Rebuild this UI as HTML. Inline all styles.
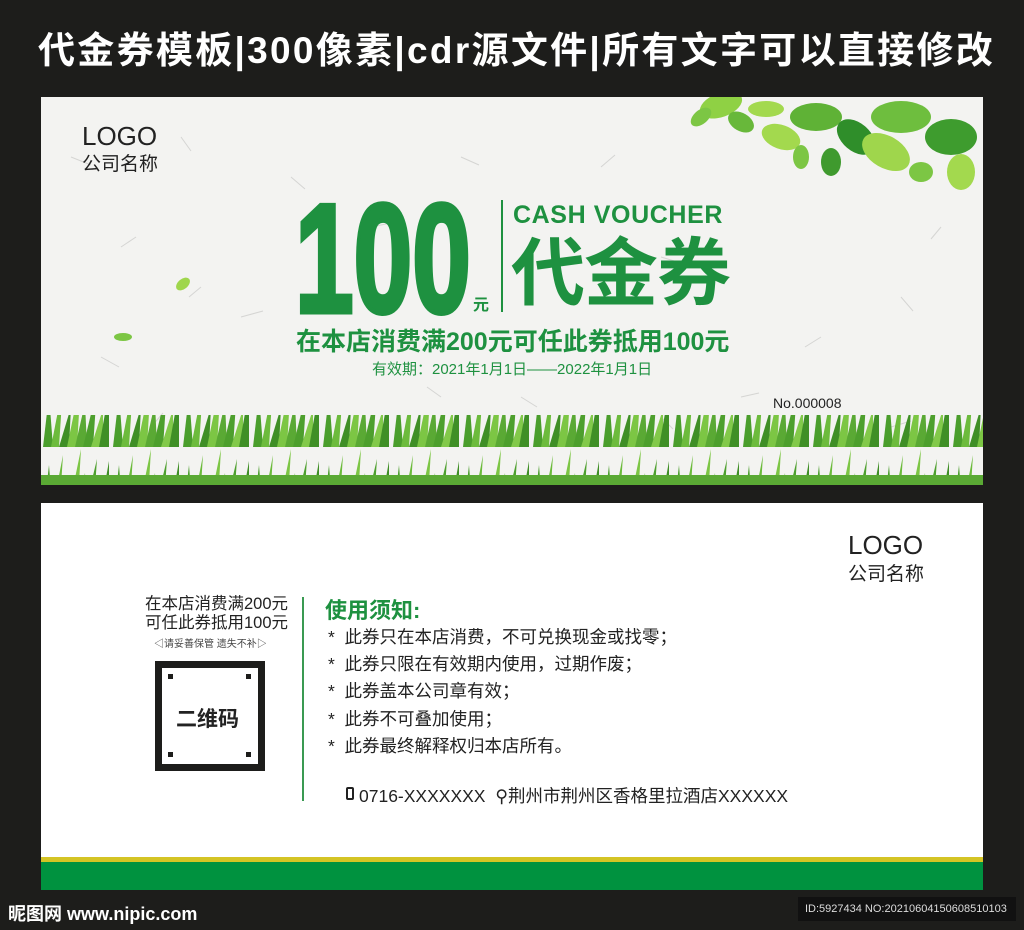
<!DOCTYPE html>
<html><head><meta charset="utf-8"><style>
body{margin:0;width:1024px;height:930px;background:#1d1d1b;position:relative;overflow:hidden;font-family:"Liberation Sans","Noto Sans CJK SC",sans-serif}
.a{position:absolute;white-space:nowrap}
.g{color:#1e9140}
</style></head><body>
<div class="a" style="left:38px;top:28px;color:#fff;font-size:37px;font-weight:bold;letter-spacing:2.3px;line-height:46px">代金券模板|300像素|cdr源文件|所有文字可以直接修改</div>

<div class="a" style="left:41px;top:97px;width:942px;height:388px;background:#f3f3f1;overflow:hidden">
<svg width="942" height="388" style="position:absolute;left:0;top:0">
<defs>
<pattern id="gr" width="70" height="70" patternUnits="userSpaceOnUse">
<polygon points="2,70 8,18 12,70" fill="#4a9e2c"/>
<polygon points="10,70 22,8 18,70" fill="#6cbb3c"/>
<polygon points="18,70 30,30 28,70" fill="#3f8f26"/>
<polygon points="26,70 40,2 36,70" fill="#7cc644"/>
<polygon points="34,70 44,26 46,70" fill="#5aa934"/>
<polygon points="42,70 56,12 52,70" fill="#4d9f2d"/>
<polygon points="50,70 62,32 62,70" fill="#82c94a"/>
<polygon points="58,70 68,14 68,70" fill="#3f8f26"/>
</pattern>
</defs>
<g stroke="#c8c8c6" stroke-width="1" fill="none" opacity="0.7">
<path d="M30 60l20 8M80 150l15-10M140 40l10 14M200 220l22-6M60 260l18 10M250 80l14 12M330 130l20-4M110 330l12-14M420 60l18 8M560 70l14-12M620 160l20 6M780 240l-16 10M860 200l12 14M700 300l18-4M900 130l-10 12M480 300l16 10M160 190l-12 10M400 300l-14-10M850 330l20-6M620 320l12 12"/>
</g>
<rect x="0" y="318" width="942" height="70" fill="url(#gr)"/>
<rect x="0" y="378" width="942" height="10" fill="#5aa934"/>
<g>
<ellipse cx="680" cy="8" rx="22" ry="12" fill="#8fd144" transform="rotate(-20 680 8)"/>
<ellipse cx="660" cy="20" rx="12" ry="7" fill="#7cc644" transform="rotate(-40 660 20)"/>
<ellipse cx="700" cy="25" rx="14" ry="9" fill="#68b83a" transform="rotate(30 700 25)"/>
<ellipse cx="740" cy="40" rx="20" ry="12" fill="#a3d94e" transform="rotate(20 740 40)"/>
<ellipse cx="775" cy="20" rx="26" ry="14" fill="#5fb236"/>
<ellipse cx="815" cy="40" rx="22" ry="14" fill="#2f8e2a" transform="rotate(40 815 40)"/>
<ellipse cx="845" cy="55" rx="26" ry="16" fill="#9fd64c" transform="rotate(30 845 55)"/>
<ellipse cx="860" cy="20" rx="30" ry="16" fill="#6ebe3e"/>
<ellipse cx="910" cy="40" rx="26" ry="18" fill="#3e9c2e"/>
<ellipse cx="920" cy="75" rx="14" ry="18" fill="#a3d94e"/>
<ellipse cx="790" cy="65" rx="10" ry="14" fill="#3f9a2e"/>
<ellipse cx="760" cy="60" rx="8" ry="12" fill="#7cc644"/>
<ellipse cx="725" cy="12" rx="18" ry="8" fill="#a3d94e"/>
<ellipse cx="880" cy="75" rx="12" ry="10" fill="#7cc644"/>
</g>
<ellipse cx="142" cy="187" rx="8" ry="5" fill="#9fd64c" transform="rotate(-40 142 187)"/>
<ellipse cx="82" cy="240" rx="9" ry="4" fill="#7cc644"/>
</svg>
<div class="a" style="left:41px;top:24px;font-size:26px;color:#222">LOGO</div>
<div class="a" style="left:41px;top:52px;font-size:19px;color:#222">公司名称</div>
<div class="a g" style="left:254px;top:84px;font-size:155px;font-weight:bold;line-height:155px;-webkit-text-stroke:5px #1e9140;transform:scaleX(0.68);transform-origin:left top">100</div>
<div class="a g" style="left:432px;top:194px;font-size:16px;font-weight:bold">元</div>
<div class="a" style="left:460px;top:103px;width:2px;height:112px;background:#1e9140"></div>
<div class="a g" style="left:472px;top:104px;font-size:25px;font-weight:bold;letter-spacing:0.6px">CASH VOUCHER</div>
<div class="a g" style="left:470px;top:134px;font-size:74px;font-weight:bold;line-height:86px;letter-spacing:-1px">代金券</div>
<div class="a g" style="left:255px;top:225px;font-size:25px;font-weight:bold">在本店消费满200元可任此券抵用100元</div>
<div class="a g" style="left:331px;top:261px;font-size:15px">有效期：2021年1月1日——2022年1月1日</div>
<div class="a" style="left:732px;top:298px;font-size:14px;color:#222">No.000008</div>
</div>

<div class="a" style="left:41px;top:503px;width:942px;height:387px;background:#fff">
<div class="a" style="left:807px;top:27px;font-size:26px;color:#222">LOGO</div>
<div class="a" style="left:807px;top:56px;font-size:19px;color:#222">公司名称</div>
<div class="a" style="left:104px;top:92px;font-size:16.5px;color:#222;line-height:19px">在本店消费满200元<br>可任此券抵用100元</div>
<div class="a" style="left:113px;top:132px;font-size:10px;color:#444">◁请妥善保管 遗失不补▷</div>
<div class="a" style="left:114px;top:158px;width:96px;height:96px;border:7px solid #1d1d1b"></div>
<div class="a" style="left:127px;top:171px;width:5px;height:5px;background:#1d1d1b"></div>
<div class="a" style="left:205px;top:171px;width:5px;height:5px;background:#1d1d1b"></div>
<div class="a" style="left:127px;top:249px;width:5px;height:5px;background:#1d1d1b"></div>
<div class="a" style="left:205px;top:249px;width:5px;height:5px;background:#1d1d1b"></div>
<div class="a" style="left:135px;top:200px;font-size:21px;font-weight:bold;color:#222">二维码</div>
<div class="a" style="left:261px;top:94px;width:2px;height:204px;background:#3a9a52"></div>
<div class="a g" style="left:284px;top:90px;font-size:22px;font-weight:bold">使用须知:</div>
<div class="a" style="left:287px;top:121px;font-size:17.5px;color:#222;line-height:27.2px">* &nbsp;此券只在本店消费，不可兑换现金或找零；<br>* &nbsp;此券只限在有效期内使用，过期作废；<br>* &nbsp;此券盖本公司章有效；<br>* &nbsp;此券不可叠加使用；<br>* &nbsp;此券最终解释权归本店所有。</div>
<div class="a" style="left:305px;top:284px;width:8px;height:13px;border:2px solid #222;border-radius:2px;box-sizing:border-box"></div>
<div class="a" style="left:318px;top:280px;font-size:17.5px;color:#222">0716-XXXXXXX &nbsp;⚲荆州市荆州区香格里拉酒店XXXXXX</div>
<div class="a" style="left:0;top:354px;width:942px;height:5px;background:#d4c424"></div>
<div class="a" style="left:0;top:359px;width:942px;height:28px;background:#00923f"></div>
</div>

<div class="a" style="left:8px;top:900px;font-size:18px;font-weight:bold;color:#fff">昵图网 www.nipic.com</div>
<div class="a" style="left:798px;top:897px;width:218px;height:24px;background:#111"></div>
<div class="a" style="left:805px;top:903px;font-size:11px;color:#ddd">ID:5927434 NO:20210604150608510103</div>
</body></html>
